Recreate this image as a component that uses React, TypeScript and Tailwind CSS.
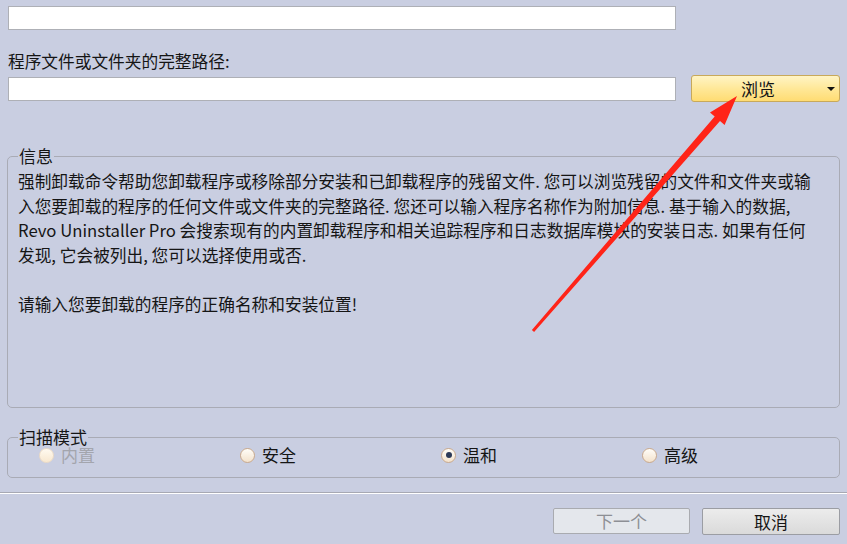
import React from 'react'

const font = { fontFamily: '"Noto Sans CJK SC", "Liberation Sans", sans-serif' }

const Radio = ({ label, checked, disabled }: { label: string; checked?: boolean; disabled?: boolean }) => (
  <div className="flex items-center h-[16px]">
    <span
      className={
        'flex items-center justify-center w-[15px] h-[15px] rounded-full border ' +
        (disabled
          ? 'border-[#eddcc6] bg-gradient-to-b from-[#fffaf0] to-[#f8e8d0]'
          : 'border-[#c9a98c] bg-gradient-to-b from-[#fffdf8] to-[#f3e2cc]')
      }
    >
      {checked && <span className="w-[6px] h-[6px] rounded-full bg-[#2c3a58]" />}
    </span>
    <span className={'ml-[7px] text-[17px] leading-[16px] ' + (disabled ? 'text-[#a3a5ad]' : 'text-[#151515]')}>
      {label}
    </span>
  </div>
)

export default function App() {
  return (
    <div className="relative w-[847px] h-[544px] overflow-hidden bg-[#c9cee1] text-[#151515]" style={font}>
      <div className="pt-[6px] pl-[8px]">
        <div className="w-[668px] h-[24px] bg-white border border-[#aeb0b6]" />
        <div className="mt-[21px] text-[16.7px] leading-[20px]">程序文件或文件夹的完整路径:</div>
        <div className="mt-[4px] flex items-center">
          <div className="w-[668px] h-[24px] bg-white border border-[#aeb0b6]" />
          <button className="ml-[15px] relative w-[149px] h-[27px] rounded-[3px] border border-[#c8a95a] bg-gradient-to-b from-[#fff4c4] via-[#ffe898] to-[#ffdc72] text-[17px] leading-[20px]">
            <span className="block w-[132px] text-center">浏览</span>
            <span className="absolute right-[4px] top-[11px] w-0 h-0 border-l-[4px] border-r-[4px] border-t-[4px] border-l-transparent border-r-transparent border-t-[#111]" />
          </button>
        </div>
      </div>

      <fieldset className="mt-[44px] ml-[7px] w-[833px] pl-[10px] pr-[10px] pt-[3px] border border-[#a9abb5] rounded-[5px]">
        <legend className="px-[1px] text-[17px] leading-[20px]">信息</legend>
        <div className="h-[238px] text-[16.7px] leading-[24.6px]">
          强制卸载命令帮助您卸载程序或移除部分安装和已卸载程序的残留文件. 您可以浏览残留的文件和文件夹或输
          <br />
          入您要卸载的程序的任何文件或文件夹的完整路径. 您还可以输入程序名称作为附加信息. 基于输入的数据,
          <br />
          Revo Uninstaller Pro 会搜索现有的内置卸载程序和相关追踪程序和日志数据库模块的安装日志. 如果有任何
          <br />
          发现, 它会被列出, 您可以选择使用或否.
          <br />
          <br />
          请输入您要卸载的程序的正确名称和安装位置!
        </div>
      </fieldset>

      <fieldset className="mt-[20px] ml-[7px] w-[833px] pl-[10px] pt-[1px] pb-[14px] border border-[#a9abb5] rounded-[5px]">
        <legend className="px-[1px] text-[17px] leading-[18px]">扫描模式</legend>
        <div className="ml-[21px] grid grid-cols-[201px_201px_201px_180px]">
          <Radio label="内置" disabled />
          <Radio label="安全" />
          <Radio label="温和" checked />
          <Radio label="高级" />
        </div>
      </fieldset>

      <div className="mt-[14px] border-t border-[#a7a9b3] border-b border-b-white" />

      <div className="mt-[14px] flex justify-end gap-[12px] pr-[7px]">
        <button className="w-[137px] h-[26px] rounded-[2px] border border-[#a9abb0] bg-[#e4e7ec] text-[17px] leading-[20px] text-[#8d8f95]">
          下一个
        </button>
        <button className="w-[138px] h-[27px] rounded-[2px] border border-[#9b9da3] bg-gradient-to-b from-[#ececec] to-[#dadada] text-[17px] leading-[20px] text-[#151515]">
          取消
        </button>
      </div>

      <svg className="absolute left-0 top-0 pointer-events-none" width="847" height="544">
        <polygon
          points="534.1,332 720,121 724.6,125 737,96 710,112.5 714.7,116.4 531.9,330"
          fill="#ff2418"
        />
      </svg>
    </div>
  )
}
